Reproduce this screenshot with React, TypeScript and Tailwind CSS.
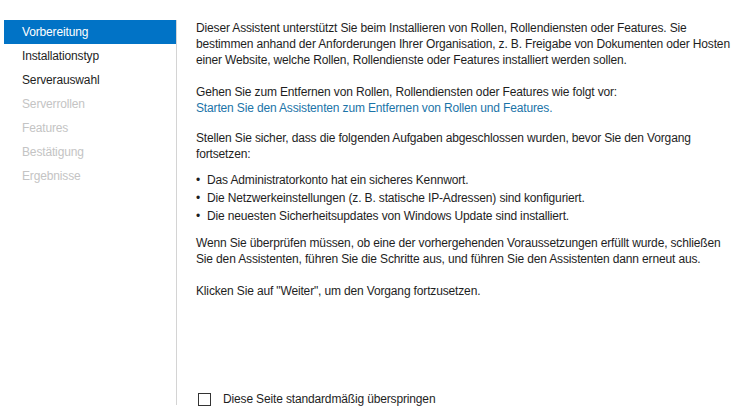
const steps = [
  { label: 'Vorbereitung', state: 'active' },
  { label: 'Installationstyp', state: 'enabled' },
  { label: 'Serverauswahl', state: 'enabled' },
  { label: 'Serverrollen', state: 'disabled' },
  { label: 'Features', state: 'disabled' },
  { label: 'Bestätigung', state: 'disabled' },
  { label: 'Ergebnisse', state: 'disabled' },
];

const bullets = [
  'Das Administratorkonto hat ein sicheres Kennwort.',
  'Die Netzwerkeinstellungen (z. B. statische IP-Adressen) sind konfiguriert.',
  'Die neuesten Sicherheitsupdates von Windows Update sind installiert.',
];

export default function App() {
  return (
    <div
      className="flex w-[754px] h-[418px] bg-white text-[12px] leading-[16px] tracking-[-0.15px] text-[#1e1e1e] overflow-hidden"
      style={{ fontFamily: '"Liberation Sans", Arial, sans-serif' }}
    >
      {/* Step list */}
      <div className="w-[176px] shrink-0 pt-[20px] pl-[4px]">
        {steps.map((s) => (
          <div
            key={s.label}
            className={
              s.state === 'active'
                ? 'h-[24px] pl-[18px] flex items-center bg-[#0173c6] text-white'
                : s.state === 'enabled'
                ? 'h-[24px] pl-[18px] flex items-center text-[#1e1e1e]'
                : 'h-[24px] pl-[18px] flex items-center text-[#c4c4c4]'
            }
          >
            {s.label}
          </div>
        ))}
      </div>

      {/* Divider */}
      <div className="mt-[20px] h-[385px] w-px bg-[#d4d4d4] shrink-0" />

      {/* Content */}
      <div className="flex flex-col flex-1 pl-[19px] pt-[20px] whitespace-nowrap">
        <p>
          Dieser Assistent unterstützt Sie beim Installieren von Rollen, Rollendiensten oder Features. Sie
          <br />
          bestimmen anhand der Anforderungen Ihrer Organisation, z. B. Freigabe von Dokumenten oder Hosten
          <br />
          einer Website, welche Rollen, Rollendienste oder Features installiert werden sollen.
        </p>
        <p className="mt-[16px]">Gehen Sie zum Entfernen von Rollen, Rollendiensten oder Features wie folgt vor:</p>
        <p className="text-[#1b74a8]">Starten Sie den Assistenten zum Entfernen von Rollen und Features.</p>
        <p className="mt-[14px]">
          Stellen Sie sicher, dass die folgenden Aufgaben abgeschlossen wurden, bevor Sie den Vorgang
          <br />
          fortsetzen:
        </p>
        <ul className="mt-[10px] flex flex-col gap-[2px]">
          {bullets.map((b) => (
            <li key={b} className="flex">
              <span className="w-[11px] shrink-0">•</span>
              <span>{b}</span>
            </li>
          ))}
        </ul>
        <p className="mt-[11px]">
          Wenn Sie überprüfen müssen, ob eine der vorhergehenden Voraussetzungen erfüllt wurde, schließen
          <br />
          Sie den Assistenten, führen Sie die Schritte aus, und führen Sie den Assistenten dann erneut aus.
        </p>
        <p className="mt-[16px]">Klicken Sie auf "Weiter", um den Vorgang fortzusetzen.</p>

        <label className="mt-auto mb-[11px] ml-[2px] flex items-center gap-[12px]">
          <span className="w-[13px] h-[13px] border border-[#333] bg-white" />
          <span>Diese Seite standardmäßig überspringen</span>
        </label>
      </div>
    </div>
  );
}
